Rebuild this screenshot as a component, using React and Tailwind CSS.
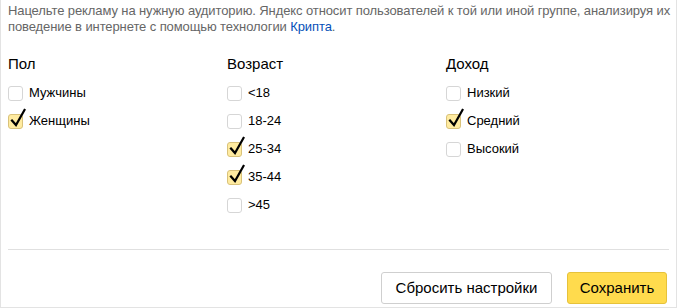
import { useState } from "react";

const groups = [
  {
    title: "Пол",
    items: [
      { label: "Мужчины", checked: false },
      { label: "Женщины", checked: true },
    ],
  },
  {
    title: "Возраст",
    items: [
      { label: "<18", checked: false },
      { label: "18-24", checked: false },
      { label: "25-34", checked: true },
      { label: "35-44", checked: true },
      { label: ">45", checked: false },
    ],
  },
  {
    title: "Доход",
    items: [
      { label: "Низкий", checked: false },
      { label: "Средний", checked: true },
      { label: "Высокий", checked: false },
    ],
  },
];

const Checkbox = ({ checked, label, onToggle }) => (
  <label className="flex items-center h-[28px] cursor-pointer select-none" onClick={onToggle}>
    <span
      className={
        "relative w-[15px] h-[15px] rounded-[3px] border " +
        (checked ? "bg-[#ffeba0] border-[#d9c27a]" : "bg-white border-[#d6d6d6]")
      }
    >
      {checked && (
        <svg className="absolute left-[1px] top-[-7px]" width="18" height="20" viewBox="0 0 18 20">
          <path d="M2 12.5 L6 17 L14.5 2" fill="none" stroke="#000" strokeWidth="2.2" strokeLinecap="square" strokeLinejoin="miter" />
        </svg>
      )}
    </span>
    <span className="ml-[6px] text-[13px] text-black">{label}</span>
  </label>
);

const App = () => {
  const [data, setData] = useState(groups);

  const toggle = (gi, ii) => {
    setData((prev) =>
      prev.map((g, a) =>
        a !== gi ? g : { ...g, items: g.items.map((it, b) => (b !== ii ? it : { ...it, checked: !it.checked })) }
      )
    );
  };

  return (
    <div
      className="w-[677px] h-[308px] bg-white border-l border-r border-b border-[#e3e3e3] flex flex-col"
      style={{ fontFamily: '"Liberation Sans", Arial, sans-serif' }}
    >
      <p className="pl-[7px] pr-0 pt-[3px] text-[13px] leading-[16px] tracking-[-0.1px] text-[#666]">
        Нацельте рекламу на нужную аудиторию. Яндекс относит пользователей к той или иной группе, анализируя их
        поведение в интернете с помощью технологии <a className="text-[#0650b8]">Крипта</a>.
      </p>

      <div className="flex pl-[7px] mt-[20px] h-[170px]">
        {data.map((g, gi) => (
          <div key={g.title} className="w-[219px]">
            <h3 className="text-[15px] leading-[18px] text-black">{g.title}</h3>
            <div className="mt-[6px]">
              {g.items.map((it, ii) => (
                <Checkbox key={it.label} label={it.label} checked={it.checked} onToggle={() => toggle(gi, ii)} />
              ))}
            </div>
          </div>
        ))}
      </div>

      <div className="ml-[7px] mr-[7px] mt-auto border-t border-[#e0e0e0]"></div>

      <div className="flex justify-end gap-[15px] pr-[9px] pt-[22px] pb-[3px]">
        <button className="w-[171px] h-[32px] rounded-[3px] border border-[#cfcfcf] bg-white text-[15px] text-black">
          Сбросить настройки
        </button>
        <button className="w-[100px] h-[32px] rounded-[3px] border border-[#e6c23b] bg-[#ffdb4d] text-[15px] text-black">
          Сохранить
        </button>
      </div>
    </div>
  );
};

export default App;
